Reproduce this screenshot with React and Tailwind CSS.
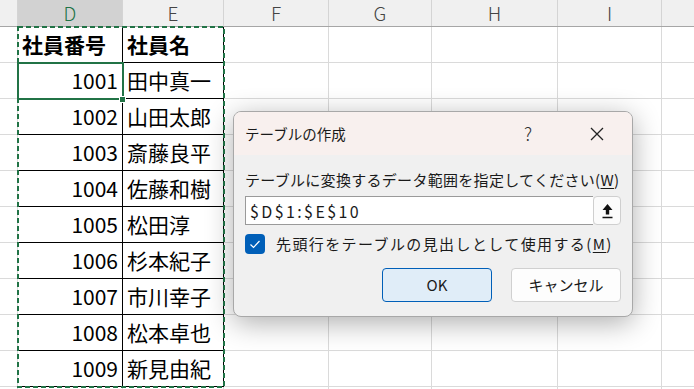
import React from 'react';

const cols = [
  { key: 'C', w: 'w-[18px]', label: '' },
  { key: 'D', w: 'w-[105px]', label: 'D' },
  { key: 'E', w: 'w-[101px]', label: 'E' },
  { key: 'F', w: 'w-[105px]', label: 'F' },
  { key: 'G', w: 'w-[103px]', label: 'G' },
  { key: 'H', w: 'w-[126px]', label: 'H' },
  { key: 'I', w: 'w-[104px]', label: 'I' },
];

const rows = [
  ['社員番号', '社員名'],
  ['1001', '田中真一'],
  ['1002', '山田太郎'],
  ['1003', '斎藤良平'],
  ['1004', '佐藤和樹'],
  ['1005', '松田淳'],
  ['1006', '杉本紀子'],
  ['1007', '市川幸子'],
  ['1008', '松本卓也'],
  ['1009', '新見由紀'],
  ['', ''],
];

function HeaderRow() {
  return (
    <div className="flex h-[27px] border-b border-[#a6a6a6] bg-[#f0f0f0]">
      {cols.map((c) => (
        <div
          key={c.key}
          className={`${c.w} flex shrink-0 items-center justify-center border-r border-[#d4d4d4] text-[19px] font-light ${
            c.key === 'D' ? 'bg-[#d2d2d2] text-[#217346]' : 'text-[#444]'
          }`}
        >
          {c.label}
        </div>
      ))}
      <div className="flex-1" />
    </div>
  );
}

function Row({ data, index }) {
  const inTable = index < 10;
  const head = index === 0;
  const line = inTable ? 'border-black' : 'border-[#dadada]';
  return (
    <div className="flex h-[36px]">
      <div className="w-[18px] shrink-0 border-r border-b border-[#dadada]" />
      <div
        className={`w-[105px] shrink-0 flex items-center border-r border-b ${line} text-[21px] ${
          head ? 'justify-start pl-[4px] font-bold' : 'justify-end pr-[4px]'
        }`}
      >
        {data[0]}
      </div>
      <div
        className={`w-[101px] shrink-0 flex items-center pl-[4px] border-r border-b ${line} text-[21px] ${
          head ? 'font-bold' : ''
        }`}
      >
        {data[1]}
      </div>
      <div className="w-[105px] shrink-0 border-r border-b border-[#dadada]" />
      <div className="w-[103px] shrink-0 border-r border-b border-[#dadada]" />
      <div className="w-[126px] shrink-0 border-r border-b border-[#dadada]" />
      <div className="w-[104px] shrink-0 border-r border-b border-[#dadada]" />
      <div className="flex-1 border-b border-[#dadada]" />
    </div>
  );
}

function CreateTableDialog() {
  return (
    <div className="absolute left-[233px] top-[111px] w-[400px] h-[206px] overflow-hidden rounded-[8px] border border-[#a8a8a8] bg-[#f0f0f0] shadow-[0_6px_28px_rgba(0,0,0,0.32)] text-[#1a1a1a]">
      <div className="flex h-[43px] items-center bg-[#f8f0ee] pl-[11px] pr-[28px]">
        <span className="text-[14.5px]">テーブルの作成</span>
        <span className="ml-auto mr-[58px] text-[18px] font-light text-[#333]">?</span>
        <svg width="14" height="14" viewBox="0 0 14 14">
          <path d="M1 1L13 13M13 1L1 13" stroke="#222" strokeWidth="1.3" />
        </svg>
      </div>
      <div className="flex flex-col px-[11px] pt-[13px]">
        <div className="text-[15px] leading-[24px] tracking-[0.3px]">
          テーブルに変換するデータ範囲を指定してください(<span className="underline underline-offset-2">W</span>)
        </div>
        <div className="mt-[4px] flex h-[29px]">
          <div className="flex flex-1 items-center border border-r-0 border-[#9a9a9a] bg-white pl-[4px] text-[16px] tracking-[2.4px]">
            $D$1:$E$10
          </div>
          <div className="flex w-[28px] items-center justify-center rounded-[4px] border border-[#cfcfcf] bg-[#fbfbfb]">
            <svg width="11" height="16" viewBox="0 0 11 16">
              <path d="M5.5 1L10.5 7H7.2V11.5H3.8V7H0.5Z" fill="#111" />
              <path d="M0.5 14.5H10.5" stroke="#111" strokeWidth="1.5" />
            </svg>
          </div>
        </div>
        <div className="mt-[9px] flex h-[20px] items-center">
          <div className="flex h-[20px] w-[20px] items-center justify-center rounded-[4px] bg-[#005fb8]">
            <svg width="20" height="20" viewBox="0 0 20 20">
              <path d="M5.5 10.5L8.5 13.5L14.5 7" stroke="#fff" strokeWidth="1.2" fill="none" />
            </svg>
          </div>
          <span className="ml-[11px] text-[15px] tracking-[1.4px]">
            先頭行をテーブルの見出しとして使用する(<span className="underline underline-offset-2">M</span>)
          </span>
        </div>
        <div className="mt-[14px] flex justify-end gap-[19px]">
          <button className="flex h-[34px] w-[110px] items-center justify-center rounded-[4px] border border-[#005fb8] bg-[#e0edf8] text-[15px]">
            OK
          </button>
          <button className="flex h-[34px] w-[110px] items-center justify-center rounded-[4px] border border-[#d0d0d0] bg-[#fdfdfd] text-[15px]">
            キャンセル
          </button>
        </div>
      </div>
    </div>
  );
}

export default function App() {
  return (
    <div className="relative h-[389px] w-[694px] overflow-hidden bg-white font-[Noto_Sans_CJK_JP,Noto_Sans,sans-serif] text-black">
      <HeaderRow />
      {rows.map((r, i) => (
        <Row key={i} data={r} index={i} />
      ))}

      {/* copy range marquee */}
      <svg className="absolute left-[17px] top-[26px]" width="208" height="362">
        <rect x="1" y="1" width="206" height="360" fill="none" stroke="#217346" strokeWidth="2" strokeDasharray="5 3" />
      </svg>

      {/* active cell D2 */}
      <div className="absolute left-[17px] top-[62px] h-[38px] w-[107px] border-2 border-[#217346]" />
      <div className="absolute left-[119px] top-[96px] h-[7px] w-[7px] border border-white bg-[#217346]" />

      <CreateTableDialog />
    </div>
  );
}
